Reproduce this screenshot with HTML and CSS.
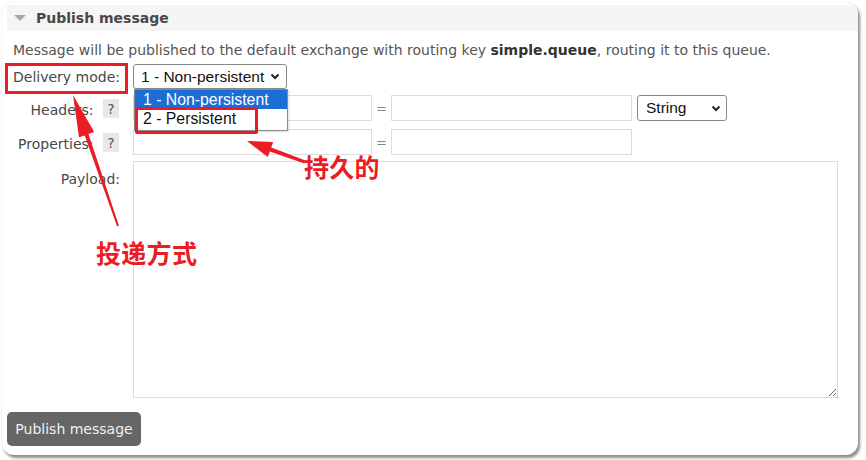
FILE: index.html
```html
<!DOCTYPE html>
<html>
<head>
<meta charset="utf-8">
<link rel="stylesheet" href="styles.css">
</head>
<body>
<div class="card">
  <div class="section-head">
    <svg class="tri" width="12" height="8" viewBox="0 0 12 8"><polygon points="0,1 12,1 6,7" fill="#a8a8a8"/></svg>
    <span>Publish message</span>
  </div>
  <p class="desc">Message will be published to the default exchange with routing key <b>simple.queue</b>, routing it to this queue.</p>
  <div class="form">
    <div class="row row-mode">
      <div class="label">Delivery mode:</div>
      <div class="select sel-mode">
        <span>1 - Non-persistent</span>
        <svg class="chev" width="10" height="7" viewBox="0 0 10 7"><polyline points="1.5,1.5 5,5 8.5,1.5" fill="none" stroke="#222" stroke-width="2"/></svg>
      </div>
    </div>
    <div class="row row-in">
      <div class="label">Headers: <span class="help">?</span></div>
      <input class="inp inp-k" type="text">
      <span class="eq">=</span>
      <input class="inp inp-v" type="text">
      <div class="select sel-type">
        <span>String</span>
        <svg class="chev" width="10" height="7" viewBox="0 0 10 7"><polyline points="1.5,1.5 5,5 8.5,1.5" fill="none" stroke="#222" stroke-width="2"/></svg>
      </div>
    </div>
    <div class="row row-in">
      <div class="label">Properties: <span class="help">?</span></div>
      <input class="inp inp-k" type="text">
      <span class="eq">=</span>
      <input class="inp inp-v" type="text">
    </div>
    <div class="row row-payload">
      <div class="label label-top">Payload:</div>
      <textarea class="payload"></textarea>
    </div>
    <div class="actions">
      <button class="btn" type="button">Publish message</button>
    </div>
  </div>
</div>

<div class="dropdown">
  <div class="opt opt-sel">1 - Non-persistent</div>
  <div class="opt">2 - Persistent</div>
</div>

<div class="mark mark-label"></div>
<div class="mark mark-opt"></div>

<svg class="arrows" width="866" height="460" viewBox="0 0 866 460">
  <polygon fill="#ec1c24" points="73,95 79.0,137.3 84.7,135.4 117.05,226.3 118.95,225.7 88.5,134.05 94.2,132.1"/>
  <polygon fill="#ec1c24" points="247,141 267.8,157.0 269.8,151.4 304.5,163.4 305.5,160.6 271.2,147.6 273.2,142.0"/>
</svg>

<div class="note note-mode">投递方式</div>
<div class="note note-persist">持久的</div>
</body>
</html>
```

FILE: styles.css
```css
* { box-sizing: border-box; }
html, body { margin: 0; padding: 0; background: #fff; }
body {
  width: 866px;
  height: 460px;
  position: relative;
  overflow: hidden;
  font-family: "DejaVu Sans", Verdana, sans-serif;
  color: #484848;
}
.card {
  margin: 2px 0 0 2px;
  width: 856px;
  height: 453px;
  background: #fff;
  border-radius: 12px;
  box-shadow: 2px 3px 3px rgba(0,0,0,0.45), 0 0 1px rgba(0,0,0,0.25);
  padding: 3px 0 0 5px;
  overflow: hidden;
}
.section-head {
  height: 26px;
  background: #f5f5f5;
  display: flex;
  align-items: center;
  padding-left: 7px;
  font-weight: bold;
  font-size: 14px;
  color: #484848;
}
.tri { margin-right: 10px; }
.desc {
  margin: 10px 0 0 6px;
  font-size: 14px;
  line-height: 18px;
  color: #555;
}
.desc b { color: #333; }
.form { display: flex; flex-direction: column; margin-top: 5px; }
.row { display: flex; align-items: center; }
.label {
  width: 121px;
  flex: none;
  text-align: right;
  padding-right: 8px;
  font-size: 14px;
  color: #484848;
  margin-right: 5px;
  display: flex;
  justify-content: flex-end;
  align-items: center;
  white-space: pre;
}
.row-mode { height: 25px; }
.row-in { height: 26px; margin-top: 6px; }
.row-in + .row-in { margin-top: 8px; }
.row-in .label { padding-right: 9px; padding-top: 4px; }
.help {
  display: inline-flex;
  width: 16px;
  height: 19px;
  background: #e8e8e8;
  align-items: center;
  justify-content: center;
  margin-left: 5px;
  font-size: 14px;
  color: #555;
  margin-top: -3px;
}
.select {
  height: 25px;
  border: 1px solid #8a8a8a;
  border-radius: 3px;
  display: flex;
  align-items: center;
  justify-content: space-between;
  padding: 0 6px 0 7px;
  font-family: "Liberation Sans", Arial, sans-serif;
  font-size: 15.5px;
  color: #111;
  background: #fff;
}
.sel-mode { width: 154px; }
.sel-type { width: 90px; height: 26px; margin-left: 5px; padding-left: 8px; padding-right: 5px; }
.inp {
  height: 26px;
  border: 1px solid #dcdcdc;
  background: #fff;
  margin: 0;
  padding: 0;
  outline: none;
}
.inp-k { width: 239px; }
.inp-v { width: 241px; }
.eq {
  width: 19px;
  text-align: center;
  font-size: 13px;
  color: #888;
}
.row-payload { align-items: flex-start; margin-top: 6px; }
.label-top { padding-top: 10px; }
.payload {
  width: 705px;
  height: 237px;
  border: 1px solid #dcdcdc;
  margin: 0;
  padding: 0;
  outline: none;
  resize: both;
}
.actions { margin-top: 14px; }
.btn {
  height: 34px;
  width: 134px;
  border: none;
  border-radius: 5px;
  background: #666;
  color: #f0f0f0;
  font-family: "DejaVu Sans", Verdana, sans-serif;
  font-size: 14px;
  padding: 0;
  margin: 0;
}
.dropdown {
  position: absolute;
  left: 134px;
  top: 89px;
  width: 154px;
  height: 42px;
  background: #fff;
  border: 1px solid #8a8a8a;
  box-shadow: 1px 1px 2px rgba(0,0,0,0.15);
  font-family: "Liberation Sans", Arial, sans-serif;
  font-size: 15.8px;
  color: #111;
}
.opt { height: 19px; line-height: 19px; padding-left: 8px; }
.opt-sel { background: #1b6ed6; color: #fff; }
.mark {
  position: absolute;
  border: 3px solid #ec1c24;
}
.mark-label { left: 5px; top: 63px; width: 123px; height: 31px; }
.mark-opt { left: 135px; top: 107px; width: 123px; height: 27px; border-radius: 2px; }
.arrows { position: absolute; left: 0; top: 0; pointer-events: none; }
.note {
  position: absolute;
  font-family: "Noto Sans CJK SC", sans-serif;
  font-weight: bold;
  font-size: 25px;
  line-height: 28px;
  color: #ec1c24;
  letter-spacing: 0.3px;
}
.note-mode { left: 96px; top: 238px; }
.note-persist { left: 304px; top: 152px; }
```
